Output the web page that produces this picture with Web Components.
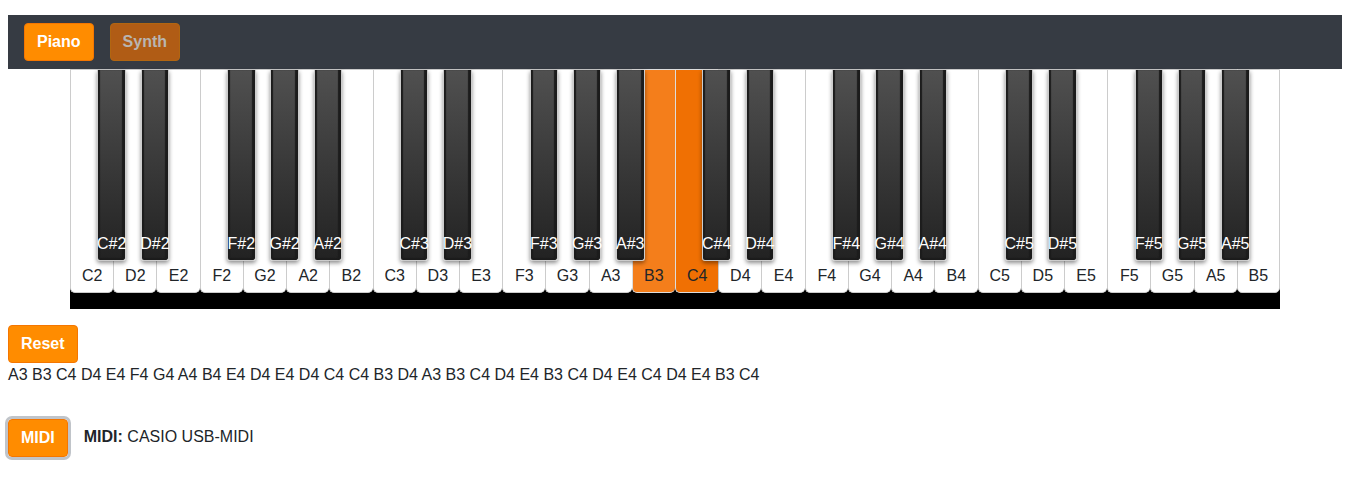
<!DOCTYPE html>
<html lang="en">
<head>
<meta charset="utf-8">
<title>Piano</title>
<style>
  body {
    margin: 0;
    padding: 15px 12px 16px 8px;
    background: #fff;
    color: #212529;
    font: 16px/24px "Liberation Sans", Arial, sans-serif;
  }
</style>
</head>
<body>
<piano-app></piano-app>

<script>
const define = (name, html, setup) => {
  const template = document.createElement('template');
  template.innerHTML = html;
  customElements.define(name, class extends HTMLElement {
    constructor() {
      super();
      this.attachShadow({ mode: 'open' }).append(template.content.cloneNode(true));
    }
    connectedCallback() {
      if (setup) setup(this, this.shadowRoot);
    }
  });
};

define('app-button', `
  <style>
    :host { display: inline-block; }
    button {
      display: block;
      margin: 0;
      padding: 6px 12px;
      border: 1px solid #f57600;
      border-radius: 4px;
      background: #ff8c00;
      color: #fff;
      font: bold 16px/24px "Liberation Sans", Arial, sans-serif;
      cursor: pointer;
    }
    :host([inactive]) button {
      background: #b05c15;
      border-color: #b26611;
      color: #b9b5b1;
    }
    :host([focused]) button { outline: 3px solid #c0c4c9; }
  </style>
  <button type="button"><slot></slot></button>
`);

define('instrument-bar', `
  <style>
    :host { display: block; background: #363b43; }
    nav { display: flex; gap: 16px; padding: 8px 16px; }
  </style>
  <nav aria-label="Instrument"><slot></slot></nav>
`);

define('piano-key', `
  <style>
    :host { display: block; grid-row: 1; min-width: 0; }
    button {
      display: flex;
      box-sizing: border-box;
      width: 100%;
      height: 224px;
      padding: 0 0 4px;
      align-items: flex-end;
      justify-content: center;
      border: 1px solid #ccc;
      border-right-width: 0;
      border-radius: 0 0 5px 5px;
      background: #fff;
      color: #212529;
      font: 16px/24px "Liberation Sans", Arial, sans-serif;
      white-space: nowrap;
    }
    :host([last]) button { border-right-width: 1px; }
    :host([pressed]) button { background: #f47e1b; border-color: #ddd; }
    :host([pressed="strong"]) button { background: #f07003; }
    :host([sharp]) {
      z-index: 1;
      justify-self: center;
      width: 33%;
      margin: 1px 3px 0 0;
    }
    :host([sharp]) button {
      height: 191px;
      border: 1px solid #ccc;
      border-top: 0;
      border-radius: 0 0 3px 3px;
      background: linear-gradient(#505050, #222);
      color: #fff;
      box-shadow: 0 2px 4px rgba(0, 0, 0, .45),
        inset 2px 0 1px #1c1c1c, inset -3px -2px 1px #1c1c1c;
    }
  </style>
  <button type="button"><slot></slot></button>
`);

define('piano-keyboard', `
  <style>
    :host { display: block; margin: 0 62px; }
    div {
      display: grid;
      grid-template-columns: repeat(28, minmax(0, 1fr));
      padding-bottom: 16px;
      background: linear-gradient(#fff 90%, #000 90%);
    }
  </style>
  <div role="group" aria-label="Keyboard"></div>
`, (host, root) => {
  const board = root.querySelector('div');
  const pressed = { B3: '', C4: 'strong' };
  let column = 0;
  const add = (name, place) => {
    const key = document.createElement('piano-key');
    key.textContent = name;
    key.style.gridColumn = place;
    board.append(key);
    return key;
  };
  for (let octave = 2; octave <= 5; octave++) {
    for (const note of 'CDEFGAB') {
      column++;
      const name = note + octave;
      const key = add(name, String(column));
      if (name in pressed) key.setAttribute('pressed', pressed[name]);
      if (column === 28) key.setAttribute('last', '');
      if ('CDFGA'.includes(note)) {
        add(note + '#' + octave, column + ' / span 2').setAttribute('sharp', '');
      }
    }
  }
});

define('note-log', `
  <style>
    :host { display: block; margin-top: 16px; }
    app-button { display: block; }
    p { margin: 0; }
  </style>
  <app-button>Reset</app-button>
  <p><slot></slot></p>
`);

define('midi-status', `
  <style>
    :host { display: flex; align-items: flex-start; gap: 16px; margin-top: 32px; }
    span { padding-top: 6px; }
  </style>
  <app-button focused>MIDI</app-button>
  <span><strong>MIDI:</strong> <slot></slot></span>
`);

define('piano-app', `
  <style>:host { display: block; }</style>
  <instrument-bar>
    <app-button>Piano</app-button>
    <app-button inactive>Synth</app-button>
  </instrument-bar>
  <piano-keyboard></piano-keyboard>
  <note-log>A3 B3 C4 D4 E4 F4 G4 A4 B4 E4 D4 E4 D4 C4 C4 B3 D4 A3 B3 C4 D4 E4 B3 C4 D4 E4 C4 D4 E4 B3 C4</note-log>
  <midi-status>CASIO USB-MIDI</midi-status>
`);
</script>
</body>
</html>
